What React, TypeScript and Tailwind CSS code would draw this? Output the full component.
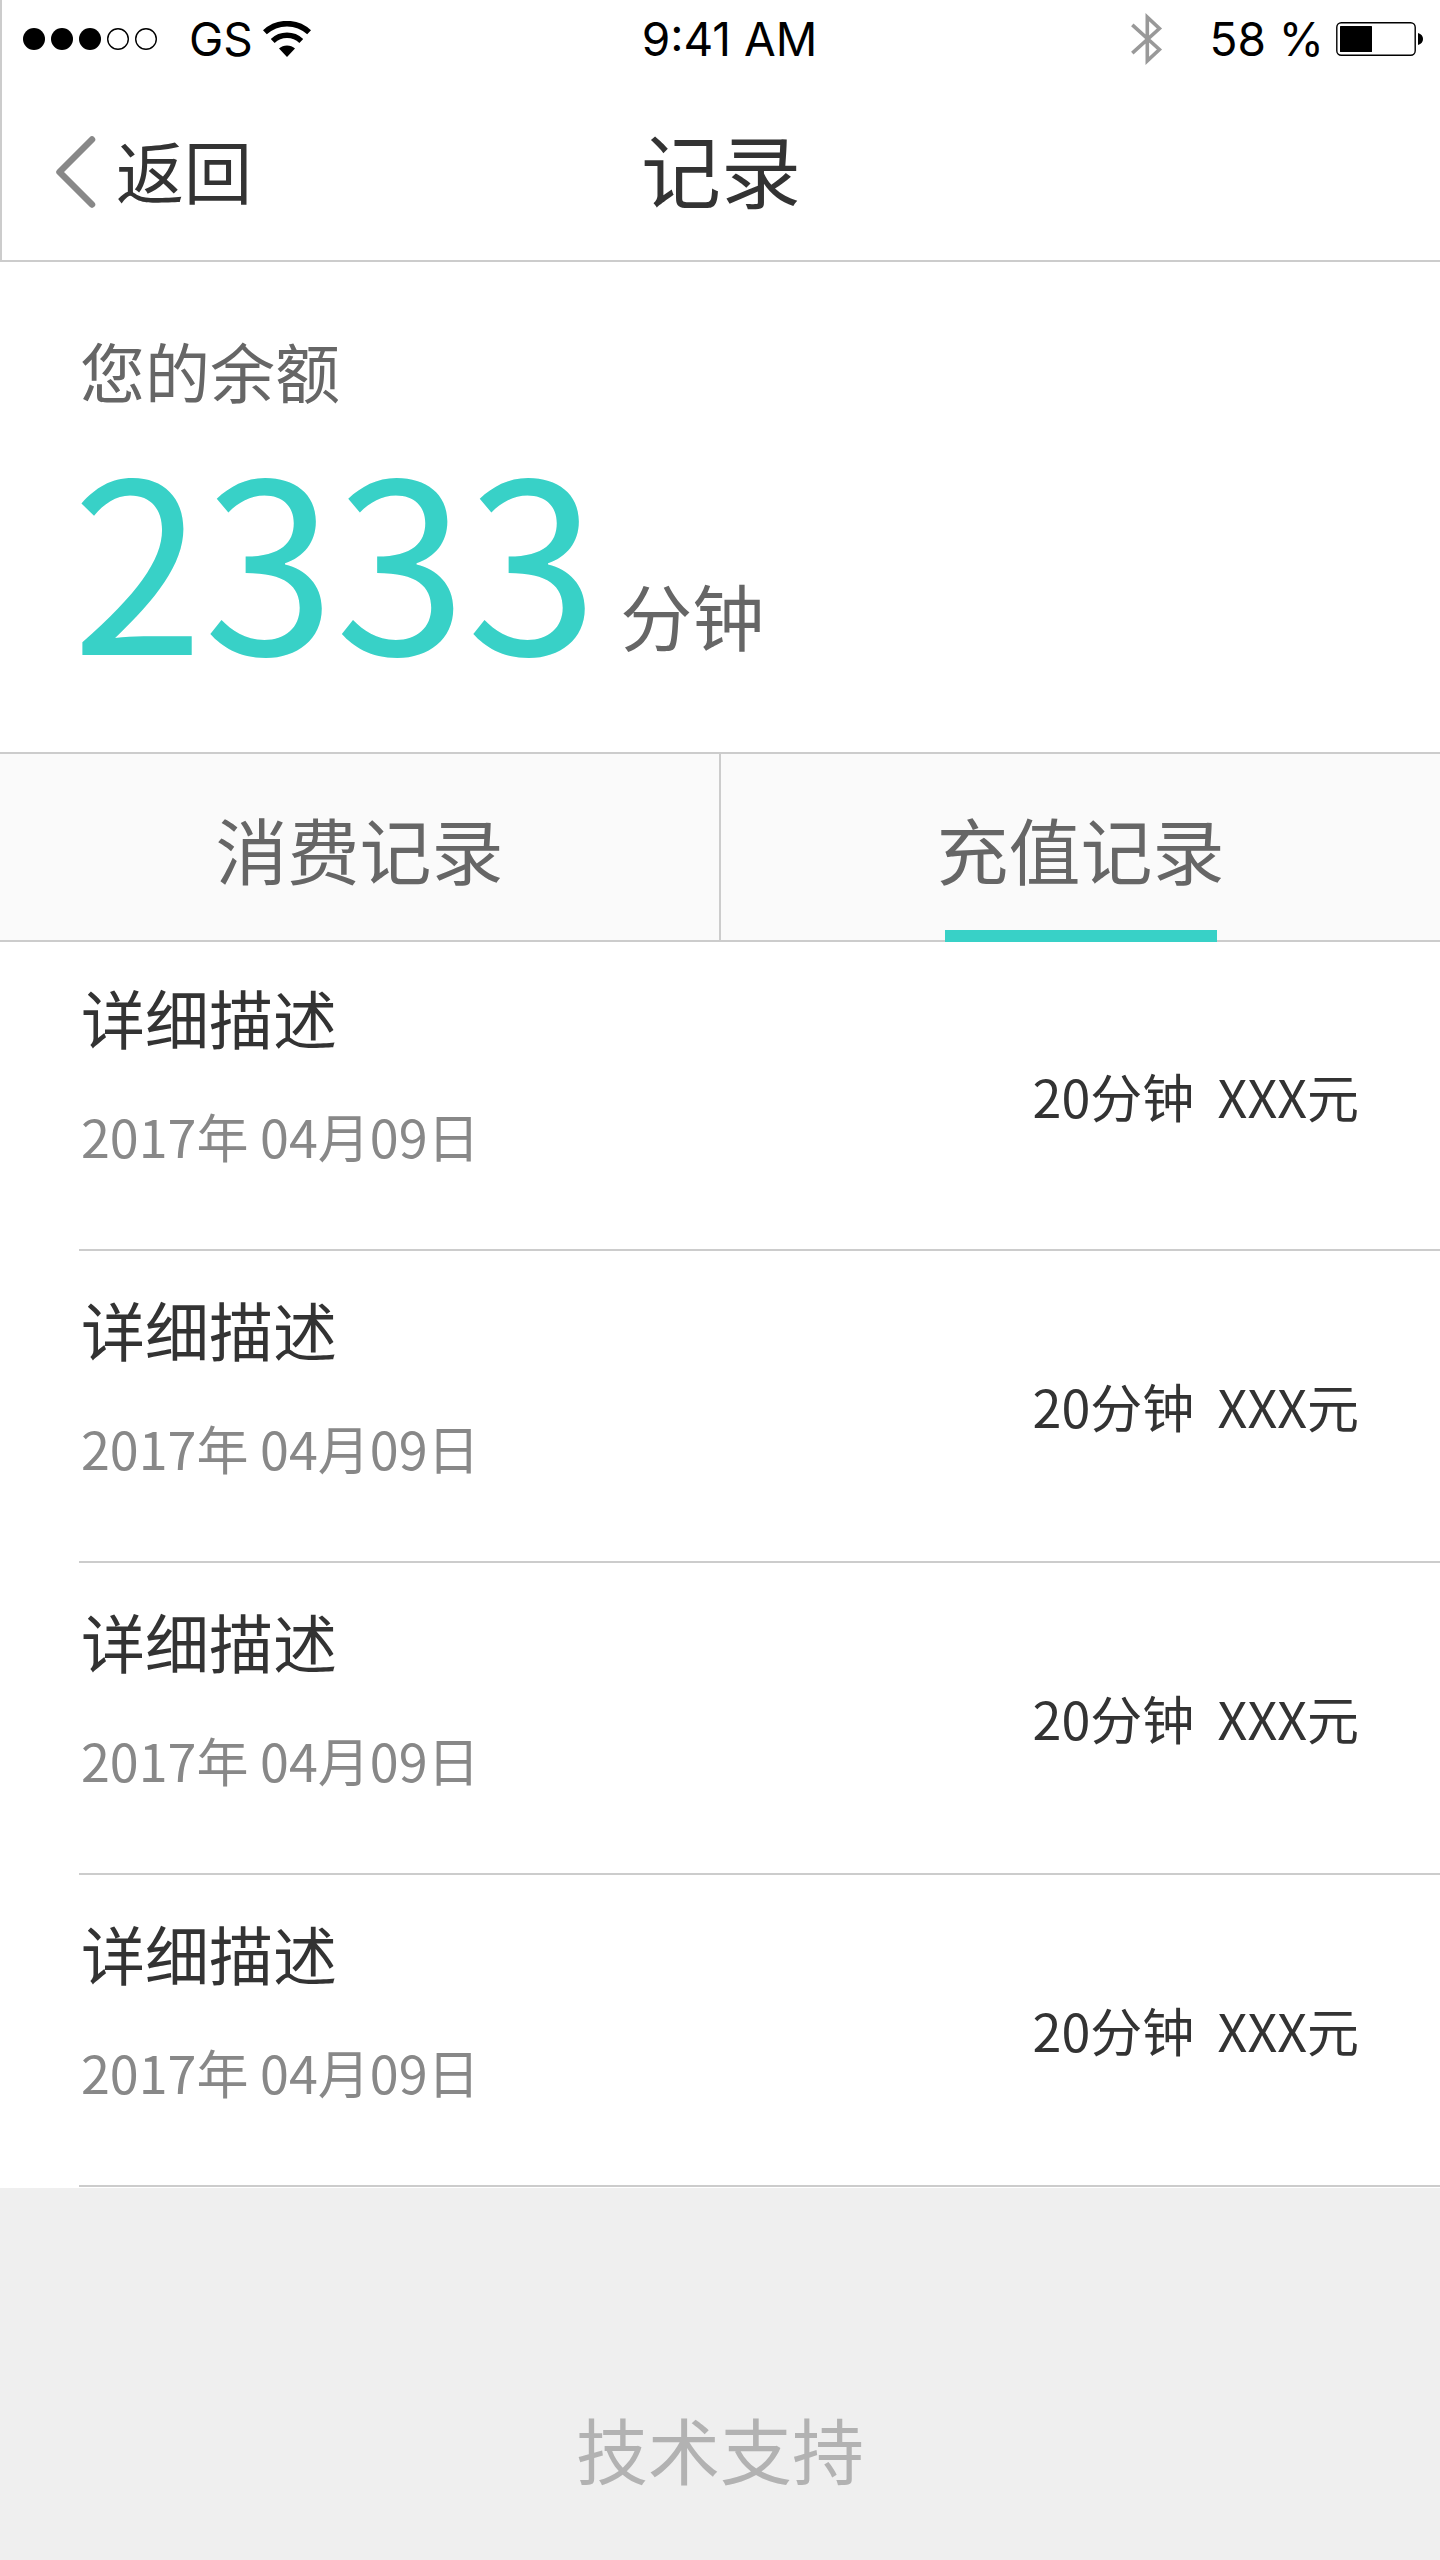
import { Fragment, useState } from "react";

const records = [1, 2, 3, 4].map((id) => ({
  id,
  title: "详细描述",
  date: "2017年 04月09日",
  minutes: "20分钟",
  price: "XXX元",
}));

const tabs = ["消费记录", "充值记录"];

function SignalDots() {
  return (
    <svg className="h-[22px] w-[134px]" viewBox="0 0 134 22" aria-label="信号">
      <circle cx="11" cy="11" r="11" />
      <circle cx="39" cy="11" r="11" />
      <circle cx="67" cy="11" r="11" />
      <circle cx="95" cy="11" r="10.3" fill="none" stroke="#000" strokeWidth="1.4" />
      <circle cx="123" cy="11" r="10.3" fill="none" stroke="#000" strokeWidth="1.4" />
    </svg>
  );
}

function WifiIcon() {
  return (
    <svg className="h-9 w-12" viewBox="0 0 48 36" aria-label="无线网络">
      <path d="M1.9 11.3a32.5 32.5 0 0 1 44.2 0" fill="none" stroke="#000" strokeWidth="5.6" />
      <path d="M9.7 20a20.8 20.8 0 0 1 28.6 0" fill="none" stroke="#000" strokeWidth="5.6" />
      <path d="M24 36 16 27.6a11.6 11.6 0 0 1 16 0z" />
    </svg>
  );
}

function BluetoothIcon() {
  return (
    <svg className="h-[52px] w-8" viewBox="0 0 32 52" fill="none" stroke="#999" strokeWidth="3.6" aria-label="蓝牙">
      <path d="M1.3 11.8 28.4 36.5 16.3 47.8V4.2L28.4 15.5 1.3 40.2" />
    </svg>
  );
}

function BatteryIcon() {
  return (
    <svg className="h-[34px] w-[88px]" viewBox="0 0 88 34" aria-label="电池">
      <rect x="0.8" y="0.8" width="78.4" height="32.4" rx="4.5" fill="none" stroke="#000" strokeWidth="1.4" />
      <rect x="4" y="4" width="32" height="26" rx="0.5" />
      <path d="M82 11q5 1.5 5 6t-5 6z" />
    </svg>
  );
}

function StatusBar() {
  return (
    <div className="grid h-[78px] grid-cols-[1fr_auto_1fr] items-center pr-4 pl-[21px] font-['Inter',sans-serif] text-[46px] leading-[56px] text-black">
      <div className="flex items-center">
        <SignalDots />
        <span className="mr-2.5 ml-8">GS</span>
        <WifiIcon />
      </div>
      <span className="pl-3">9:41 AM</span>
      <div className="flex items-center justify-end">
        <BluetoothIcon />
        <span className="mr-3 ml-[46px]">58 %</span>
        <BatteryIcon />
      </div>
    </div>
  );
}

export default function App() {
  const [active, setActive] = useState(1);

  return (
    <div
      lang="zh-CN"
      className="flex min-h-screen flex-col bg-[#efefef] font-['Noto_Sans_CJK_SC',sans-serif] text-[#333]"
    >
      <header className="border-b-2 border-l-2 border-[#ccc] bg-white">
        <StatusBar />
        <nav className="grid h-[182px] grid-cols-[1fr_auto_1fr] items-center px-[54px] pt-0.5">
          <button type="button" className="flex items-center gap-5 justify-self-start text-[68px] leading-[100px]">
            <svg className="mt-1 h-[72px] w-10" viewBox="0 0 40 72" fill="none" stroke="#888" strokeWidth="6.5" strokeLinecap="round" strokeLinejoin="round" aria-hidden="true">
              <path d="M36 3.5 3.5 36 36 68.5" />
            </svg>
            返回
          </button>
          <h1 className="pb-1.5 text-[80px] leading-[100px]">记录</h1>
        </nav>
      </header>

      <main className="bg-white">
        <section className="px-20 pt-[68px] pb-20 text-[#666]">
          <h2 className="text-[65px] leading-[80px]">您的余额</h2>
          <p className="mt-[22px] -ml-2 flex items-end gap-[22px]">
            <span className="text-[237px] leading-[240px] text-[#38d1c7]">2333</span>
            <span className="mb-[18px] text-[72px] leading-[80px]">分钟</span>
          </p>
        </section>

        <div
          role="tablist"
          className="grid grid-cols-[1fr_2px_1fr] border-y-2 border-[#ccc] bg-[#fafafa]"
        >
          {tabs.map((label, i) => (
            <Fragment key={label}>
              {i > 0 && <span role="presentation" className="bg-[#ccc]" />}
              <button
                type="button"
                role="tab"
                aria-selected={active === i}
                onClick={() => setActive(i)}
                className="relative h-[186px] pt-0.5 text-[72px] leading-[100px] text-[#666]"
              >
                {label}
                {active === i && (
                  <span className="absolute inset-x-0 -bottom-0.5 mx-auto h-3 w-[272px] bg-[#38d1c7]" />
                )}
              </button>
            </Fragment>
          ))}
        </div>

        <ul className="pb-px">
          {records.map((r) => (
            <li key={r.id} className="group ml-[79px] flex items-center justify-between border-b-2 border-[#ccc] pr-[81px]">
              <div className="pt-[37px] pb-[81px] pl-0.5 group-first:pt-[34px]">
                <h3 className="text-[64px] leading-[80px]">{r.title}</h3>
                <p className="mt-12 text-[52px] leading-[64px] text-[#888]">{r.date}</p>
              </div>
              <p className="text-[52px] leading-[64px]">
                {r.minutes}&nbsp; {r.price}
              </p>
            </li>
          ))}
        </ul>
      </main>

      <footer className="mt-auto pb-[62px] text-center text-[72px] leading-[100px] text-[#b2b2b2]">
        技术支持
      </footer>
    </div>
  );
}
